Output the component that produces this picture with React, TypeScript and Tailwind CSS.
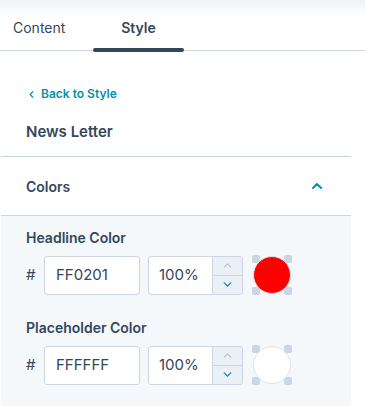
import { ChevronLeft, ChevronUp, ChevronDown } from "lucide-react";

const font = { fontFamily: "Inter, 'Noto Sans', sans-serif" };

function ColorRow({ label, hex, color }: { label: string; hex: string; color: string }) {
  return (
    <div className="pt-[13px] pb-[11px]">
      <div className="text-[14px] font-semibold text-[#33475b] pl-[25px] leading-[18px]">{label}</div>
      <div className="flex items-center mt-[8px] pl-[25px]">
        <span className="text-[15px] text-[#33475b] w-[18px]">#</span>
        <div className="w-[96px] h-[39px] bg-white border border-[#cbd6e2] rounded-[3px] flex items-center pl-[11px] text-[15px] text-[#33475b]">
          {hex}
        </div>
        <div className="ml-[8px] w-[95px] h-[39px] bg-white border border-[#cbd6e2] rounded-[3px] flex overflow-hidden">
          <div className="flex-1 flex items-center pl-[10px] text-[15px] text-[#33475b]">100%</div>
          <div className="w-[30px] flex flex-col border-l border-[#cbd6e2] bg-[#eaf0f6]">
            <div className="flex-1 flex items-center justify-center border-b border-[#cbd6e2]">
              <ChevronUp size={13} strokeWidth={2} className="text-[#b0c1d4]" />
            </div>
            <div className="flex-1 flex items-center justify-center">
              <ChevronDown size={13} strokeWidth={2.5} className="text-[#0091ae]" />
            </div>
          </div>
        </div>
        <div className="relative ml-[9px] w-[40px] h-[40px]">
          <div className="absolute left-0 top-0 w-[8px] h-[8px] bg-[#cbd6e2] rounded-[2px]" />
          <div className="absolute right-0 top-0 w-[8px] h-[8px] bg-[#cbd6e2] rounded-[2px]" />
          <div className="absolute left-0 bottom-0 w-[8px] h-[8px] bg-[#cbd6e2] rounded-[2px]" />
          <div className="absolute right-0 bottom-0 w-[8px] h-[8px] bg-[#cbd6e2] rounded-[2px]" />
          <div
            className="absolute inset-[1px] rounded-full border border-[#dfe3eb]"
            style={{ backgroundColor: color }}
          />
        </div>
      </div>
    </div>
  );
}

export default function App() {
  return (
    <div className="w-[365px] h-[406px] bg-white relative overflow-hidden" style={font}>
      <div className="h-[17px] bg-gradient-to-b from-[#eef2f6] to-white" />
      <div className="flex h-[34px] border-b border-[#cbd6e2] relative">
        <div className="w-[93px] pl-[13px] text-[14px] text-[#33475b]">Content</div>
        <div className="w-[91px] relative text-center text-[14px] font-semibold text-[#33475b]">
          Style
          <div className="absolute left-0 right-0 bottom-[-2px] h-[4px] rounded-full bg-[#33475b]" />
        </div>
      </div>
      <div className="w-[351px]">
        <div className="pl-[26px] pt-[34px] flex items-center text-[#0091ae]">
          <ChevronLeft size={11} strokeWidth={2.5} />
          <span className="ml-[4px] text-[12px] font-semibold">Back to Style</span>
        </div>
        <div className="pl-[26px] pt-[19px] pb-[14px] text-[15px] font-semibold text-[#33475b] leading-[20px]">
          News Letter
        </div>
        <div className="border-t border-[#cbd6e2] ml-[1px] h-[59px] flex items-center justify-between pl-[25px] pr-[26px]">
          <span className="text-[14px] font-semibold text-[#33475b] pt-[1px]">Colors</span>
          <ChevronUp size={16} strokeWidth={3} className="text-[#0091ae]" />
        </div>
        <div className="border-t border-[#cbd6e2] ml-[1px] bg-[#f5f8fa] h-[200px]">
          <ColorRow label="Headline Color" hex="FF0201" color="#ff0000" />
          <ColorRow label="Placeholder Color" hex="FFFFFF" color="#ffffff" />
        </div>
      </div>
    </div>
  );
}
